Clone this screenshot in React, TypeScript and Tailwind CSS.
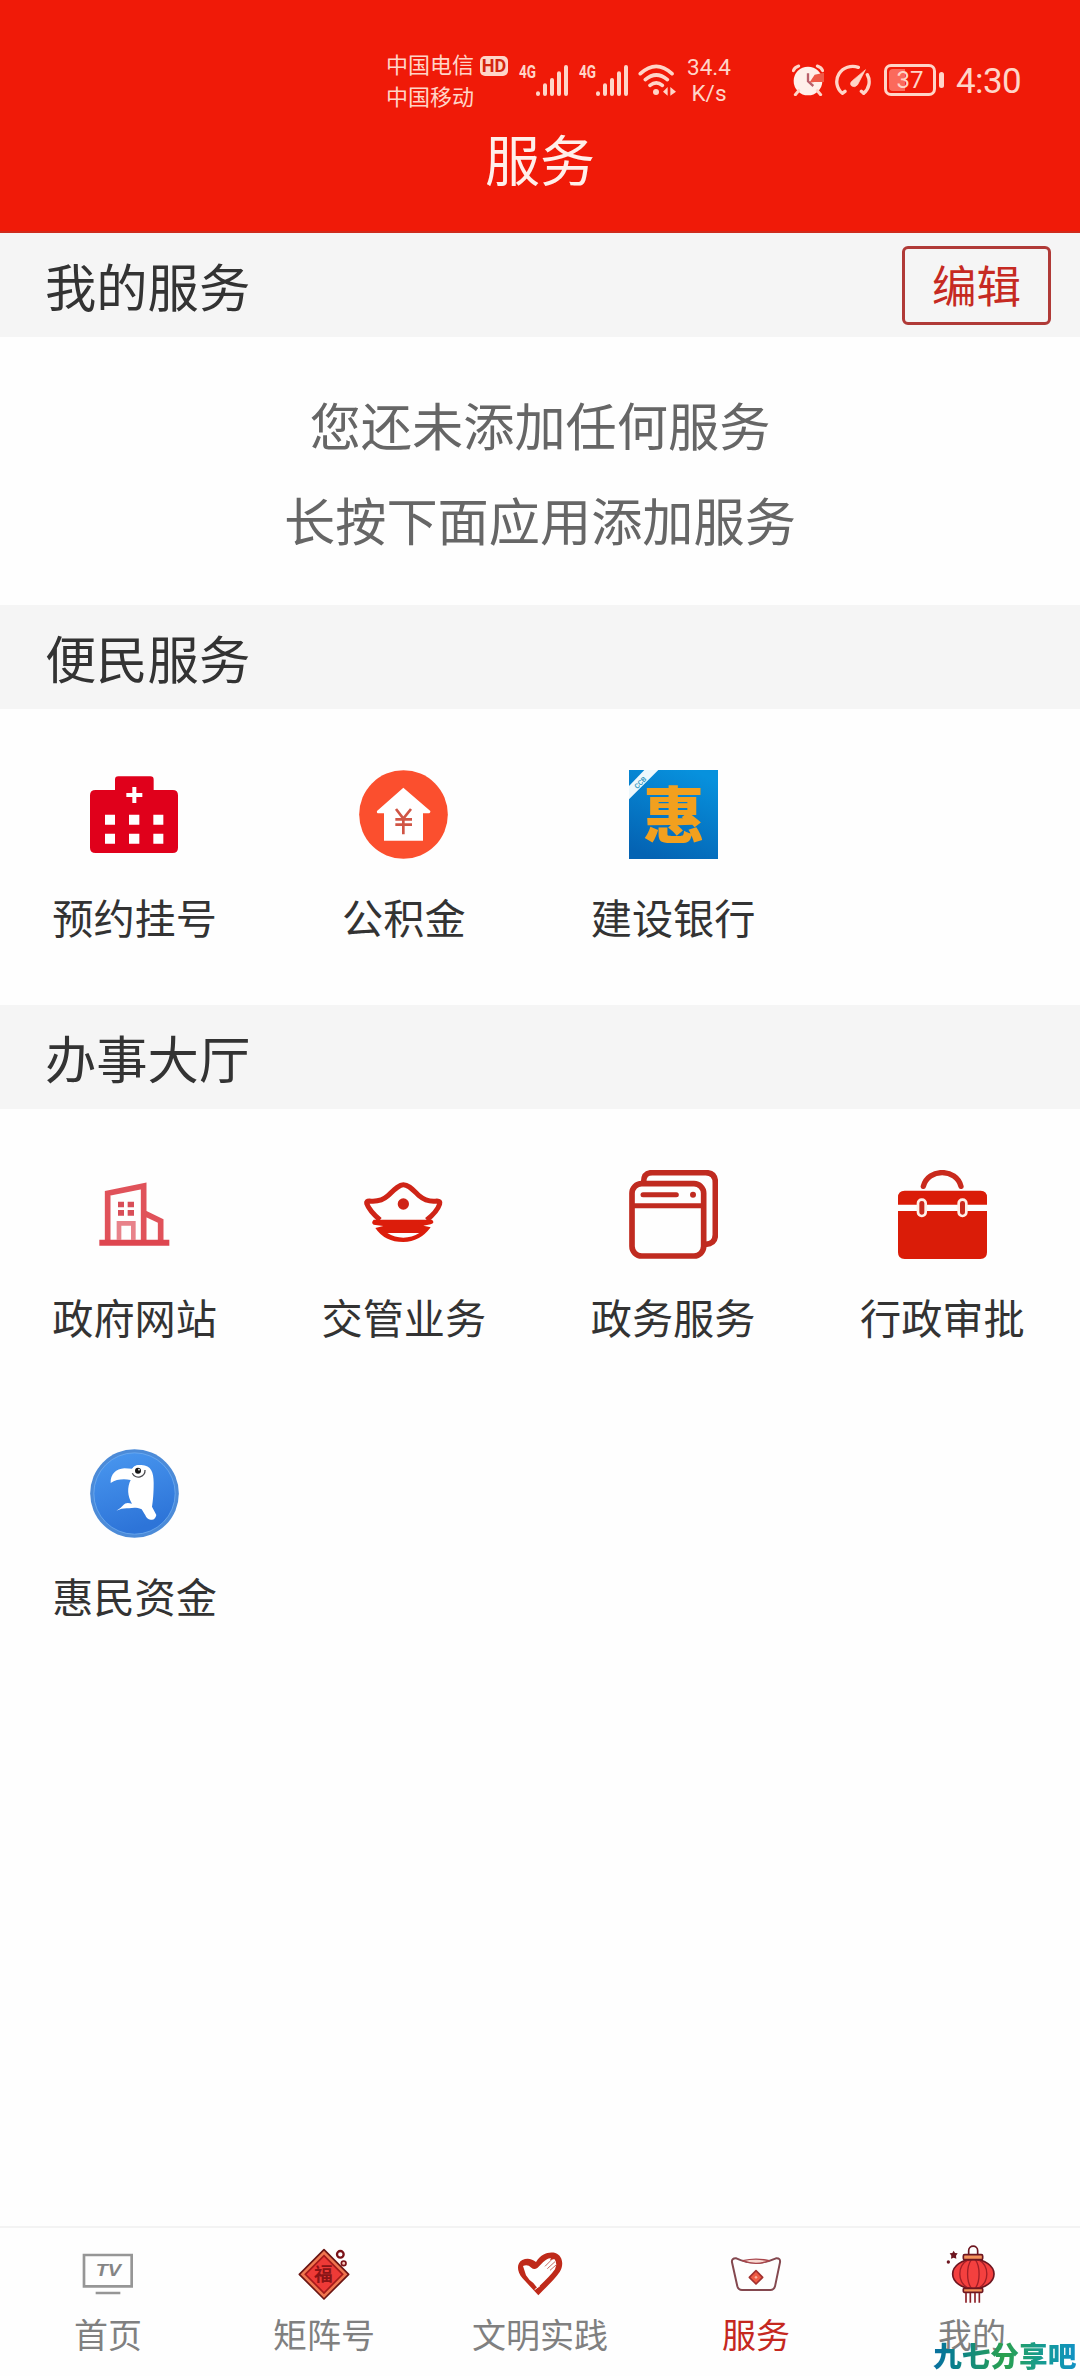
import React from "react";

type Item = { label: string; icon: React.ReactNode };

function HospitalIcon() {
  return (
    <svg className="size-[89px]" viewBox="150 90 267 267">
      <path fill="#e0001b" d="M167 150H225V119Q225 109 235 109H331Q341 109 341 119V150H398Q414 150 414 166V323Q414 339 398 339H167Q150 339 150 323V166Q150 150 167 150Z" />
      <path stroke="#fff" strokeWidth="12" d="M283 141V189M259 165H307" />
      <path fill="#fff" d="M195 224h30v30h-30zM267 224h31v30h-31zM340 224h30v30h-30zM195 281h30v30h-30zM267 281h31v30h-31zM340 281h30v30h-30z" />
    </svg>
  );
}

function FundIcon() {
  return (
    <svg className="size-[89px]" viewBox="957 90 267 267">
      <circle cx="1090.500" cy="223.500" r="133" fill="#fb4f2e" />
      <path fill="#fff" d="M1090 143L1171 213Q1172 220 1164 220H1149V302H1032V220H1016Q1009 220 1011 213Z" />
      <path fill="none" stroke="#d05545" strokeWidth="8" d="M1068 207L1090 236L1113 207M1090 234V283M1066 238H1116M1066 254H1116" />
    </svg>
  );
}

function BankIcon() {
  return (
    <svg className="size-[89px] overflow-visible" viewBox="145 90 267 267">
      <defs>
        <linearGradient id="bank" x1="0.700" y1="0" x2="0.300" y2="1">
          <stop offset="0" stopColor="#0791dd" />
          <stop offset="1" stopColor="#0463b3" />
        </linearGradient>
      </defs>
      <rect x="145" y="90" width="267" height="267" fill="url(#bank)" />
      <path fill="#eef8fc" d="M191 90H233L145 178V138Z" />
      <text x="179" y="135" transform="rotate(-45 179 128)" textAnchor="middle" fontSize="21" fontWeight="700" fill="#3b9cc4" fontFamily="Roboto">CCB</text>
      <text x="280" y="293" textAnchor="middle" fontSize="184" fontWeight="900" fill="#f2a01e" fontFamily="Noto Sans CJK SC">惠</text>
    </svg>
  );
}

function BuildingIcon() {
  return (
    <svg className="size-[89px]" viewBox="150 90 267 267" fill="none" stroke="#e0525a">
      <path strokeWidth="17" d="M203 300V160L311 138V300M316 221L362 243V300" />
      <path stroke="#de4650" strokeWidth="18" d="M178 308H388" />
      <path stroke="#e8828a" strokeWidth="14" d="M237 300V250H280V300" />
      <path fill="#d84e58" stroke="none" d="M234 185h18v17h-18zM263 185h19v17h-19zM234 210h18v17h-18zM263 210h19v17h-19z" />
    </svg>
  );
}

function IngotIcon() {
  return (
    <svg className="size-[89px]" viewBox="957 90 267 267" fill="none" stroke="#cf2417" strokeLinejoin="round">
      <path strokeWidth="15" d="M1020 240C1004 226 986 207 980 190Q978 183 988 183Q1022 187 1044 167C1062 150 1076 134 1090 134C1106 134 1119 150 1137 167Q1160 187 1191 183Q1202 183 1199 192C1193 210 1178 226 1160 240" />
      <circle cx="1090" cy="192" r="17" fill="#cf2417" stroke="none" />
      <path fill="#dc1d0b" stroke="none" d="M1001 239H1176Q1186 248 1172 253L1150 257L1172 262Q1140 306 1090 306Q1034 306 1006 264L1030 258L1001 254Q992 248 1001 239ZM1042 279Q1064 293 1090 293Q1116 293 1138 279Z" fillRule="evenodd" />
    </svg>
  );
}

function WindowsIcon() {
  return (
    <svg className="size-[89px]" viewBox="144 90 267 267" fill="none" stroke="#c02b20" strokeWidth="17" strokeLinecap="round">
      <path strokeLinecap="butt" d="M188 126C188 106 197 98 214 98H374Q403 98 403 128V284Q403 311 374 313" />
      <rect x="153" y="131" width="215" height="217" rx="29" />
      <path strokeWidth="15" strokeLinecap="butt" d="M153 197H368" />
      <path strokeWidth="15" d="M186 164H286" />
      <circle cx="336" cy="164" r="9" fill="#c02b20" stroke="none" />
    </svg>
  );
}

function BriefcaseIcon() {
  return (
    <svg className="size-[89px]" viewBox="952 90 267 267">
      <path fill="none" stroke="#c92a1d" strokeWidth="16" strokeLinecap="round" d="M1028 139C1042 84 1127 84 1141 139" />
      <path fill="#da1c08" d="M972 152H1200Q1219 152 1219 172V194H952V172Q952 152 972 152ZM952 213H1219V337Q1219 357 1199 357H972Q952 357 952 337Z" />
      <rect x="1012" y="179" width="23" height="49" rx="11" fill="#c92a1d" stroke="#fff0e8" strokeWidth="8" />
      <rect x="1134" y="179" width="23" height="49" rx="11" fill="#c92a1d" stroke="#fff0e8" strokeWidth="8" />
    </svg>
  );
}

function BirdIcon() {
  return (
    <svg className="size-[89px]" viewBox="150 87 267 267">
      <defs>
        <linearGradient id="bird" x1="0" y1="0" x2="0.300" y2="1">
          <stop offset="0" stopColor="#4a98f0" />
          <stop offset="1" stopColor="#2d74d8" />
        </linearGradient>
      </defs>
      <circle cx="283.500" cy="220.500" r="133" fill="#4c8bd8" />
      <circle cx="283.500" cy="220.500" r="122" fill="url(#bird)" stroke="#75b2f3" strokeWidth="2" />
      <path fill="#fff" d="M212 189C211 162 228 147 253 145L276 146Q287 133 304 135C334 136 341 158 341 188C341 218 339 243 336 260L349 285Q345 302 332 299Q320 298 316 286L305 268C290 262 280 263 267 265Q248 263 229 272Q245 262 251 254Q257 246 276 251C262 228 261 202 272 180C250 176 229 178 212 189Z" />
      <circle cx="295" cy="154" r="19" fill="#fff" />
      <path fill="none" stroke="#4b4b50" strokeWidth="4" d="M277 160A20 20 0 0 0 315 150" />
      <circle cx="294" cy="152" r="9" fill="#151515" />
      <circle cx="297" cy="149" r="2.500" fill="#fff" />
    </svg>
  );
}

function TvIcon() {
  return (
    <svg className="size-[60px]" viewBox="114 105 180 180">
      <path fill="none" stroke="#969696" strokeWidth="8" d="M132 135H275V229H132ZM167 249H241" />
      <text x="167" y="199" fontSize="50" fontWeight="700" fontStyle="italic" fill="#858585" textLength="76" lengthAdjust="spacingAndGlyphs" fontFamily="Liberation Sans">TV</text>
    </svg>
  );
}

function FuIcon() {
  return (
    <svg className="size-[60px]" viewBox="762 105 180 180">
      <path fill="#f0764f" stroke="#6b1513" strokeWidth="5" strokeLinejoin="round" d="M852 119L926 193L852 267L778 193Z" />
      <path fill="#ee3a37" stroke="#a51a1a" strokeWidth="5" d="M852 137L908 193L852 249L796 193Z" />
      <text x="850" y="214" textAnchor="middle" fontSize="56" fontWeight="700" fill="#8a1416" fontFamily="Noto Sans CJK SC">福</text>
      <circle cx="901" cy="133" r="10" fill="#fff" stroke="#7a1218" strokeWidth="7" />
      <circle cx="911" cy="160" r="7" fill="#f7c5b9" stroke="#7a1218" strokeWidth="5" />
    </svg>
  );
}

function HeartIcon() {
  return (
    <svg className="size-[60px]" viewBox="210 105 180 180">
      <path fill="#bf2a1a" d="M295 256L247 204C230 185 229 159 247 150C262 142 277 147 288 156C303 132 326 124 346 129C369 137 372 166 359 186C345 207 319 231 295 256Z" />
      <path fill="#fff" d="M249 168Q263 162 274 173Q282 181 292 174L309 157Q325 142 333 145L330 151L343 147L347 154L349 164L345 178Q332 197 292 234L280 219Q267 211 258 196Z" />
      <path stroke="#c76a60" strokeWidth="3" d="M315 169L334 150M322 176L345 155M330 181L348 165" />
      <path stroke="#fff" strokeWidth="3" d="M284 239L300 227" />
    </svg>
  );
}

function ServiceIcon() {
  return (
    <svg className="size-[60px]" viewBox="858 105 180 180" fill="none" stroke="#84484f" strokeWidth="6" strokeLinejoin="round">
      <path d="M889 145Q948 172 1008 145Q1022 144 1020 157L1005 229Q1002 240 991 240H906Q895 240 892 229L876 157Q874 144 889 145Z" />
      <path fill="#f8d9d2" stroke="#a8444a" strokeWidth="4" d="M908 152Q948 143 988 152Q948 168 908 152Z" />
      <path fill="#ef5a43" stroke="#a2302f" strokeWidth="5" d="M948 182L968 202L948 222L928 202Z" />
      <path fill="#f9b3a0" stroke="none" d="M948 197l5 5l-5 5l-5-5z" />
    </svg>
  );
}

function LanternIcon() {
  return (
    <svg className="size-[60px]" viewBox="246 105 180 180" fill="none" stroke="#6d1620" strokeWidth="5">
      <path d="M326 134V122C326 104 353 104 353 122V134" />
      <ellipse cx="340" cy="192" rx="62" ry="44" fill="#f4403f" />
      <path stroke="#a31f27" strokeWidth="4" d="M325 149C291 167 291 217 325 235M334 149C319 170 319 214 334 235M346 149C361 170 361 214 346 235M355 149C389 167 389 217 355 235" />
      <rect x="310" y="134" width="58" height="15" rx="4" fill="#f5925b" />
      <rect x="310" y="235" width="58" height="12" rx="3" fill="#f5925b" />
      <path stroke="#8d2028" d="M318 249V278M331 249V278M345 249V278M358 249V278" />
      <path fill="#6d1620" stroke="none" d="M281 122l4 7l8 1l-5 7l1 9l-8-3l-8 3l1-9l-5-7l8-1z" />
      <circle cx="265" cy="156" r="5" fill="#6d1620" stroke="none" />
    </svg>
  );
}

function Signal() {
  return (
    <svg className="h-8 w-[50px] overflow-visible" viewBox="446 70 150 96">
      <text x="446" y="113" fontSize="56" fontWeight="700" textLength="51" lengthAdjust="spacingAndGlyphs" fill="#ffd5c8" fontFamily="Roboto">4G</text>
      <path stroke="#ffd5c8" strokeWidth="12" strokeLinecap="round" d="M503 158V160M524 134V160M545 118V160M566 98V160M587 79V160" />
    </svg>
  );
}

function StatusBar() {
  return (
    <div className="mt-[44px] flex h-[72px] items-center pl-[386px] text-[#ffd5c8]">
      <div className="mb-[2px] w-[88px] text-[22px] leading-8 whitespace-nowrap">
        <p>中国电信</p>
        <p>中国移动</p>
      </div>
      <div className="mb-[28px] ml-[6px] flex h-5 w-7 items-center justify-center rounded-[5px] bg-[#ffd5c8] font-['Roboto',sans-serif] text-[18px] font-bold leading-none text-[#d3250f]">
        HD
      </div>
      <div className="ml-[11px] flex gap-[10px]">
        <Signal />
        <Signal />
      </div>
      <svg className="ml-[9px] h-[34px] w-[38px]" viewBox="803 68 114 102" fill="none" stroke="#ffd5c8" strokeWidth="11" strokeLinecap="round">
        <path d="M810 100Q858 56 905 100M825 118Q858 90 891 118M839 135Q858 120 876 135" />
        <circle cx="857" cy="155" r="9" fill="#ffd5c8" stroke="none" />
        <path fill="#ffd5c8" stroke="none" d="M878 154L892 140V166ZM900 140L917 154L900 166Z" />
      </svg>
      <div className="ml-[10px] w-[46px] text-center font-['Roboto',sans-serif] text-[22.500px] leading-[26px]">
        <p>34.4</p>
        <p>K/s</p>
      </div>
      <svg className="ml-[60px] h-8 w-8" viewBox="184 70 96 96">
        <circle cx="232" cy="121" r="43" fill="#fff0ea" />
        <path fill="none" stroke="#ffd5c8" strokeWidth="9" strokeLinecap="round" d="M188 90Q192 80 204 76M260 76Q272 80 276 90M204 150L194 162M260 150L270 162" />
        <path fill="#ee5a48" d="M252 102L280 96L280 124H252L236 126Z" />
        <path stroke="#b9606a" strokeWidth="7" d="M232 98V122L248 136" fill="none" />
      </svg>
      <svg className="ml-[11px] h-8 w-[37px]" viewBox="314 70 111 96" fill="none" stroke="#ffd5c8" strokeWidth="10" strokeLinecap="round">
        <path d="M336 158A48 46 0 0 1 384 80M411 102A48 46 0 0 1 400 158M336 158L344 152M400 158L393 152" />
        <path fill="#ffd5c8" strokeWidth="2" d="M405 88L382 132Q374 142 364 136Q356 128 366 120Z" />
      </svg>
      <div className="ml-3 flex h-8 w-[52px] items-center rounded-[7px] border-[3px] border-[#ffd5c8] px-[2px]">
        <div className="flex h-[22px] w-full items-center justify-center rounded-sm bg-gradient-to-r from-[#fb6a5c] from-37% to-transparent to-37% font-['Roboto',sans-serif] text-[24px] leading-none">
          37
        </div>
      </div>
      <div className="ml-[3px] h-4 w-[5px] rounded-sm bg-[#ffd5c8]" />
      <span className="mt-[3px] ml-[12px] font-['Roboto',sans-serif] text-[35px] leading-none tracking-[-0.6px]">4:30</span>
    </div>
  );
}

function SectionTitle({ title, children }: { title: string; children?: React.ReactNode }) {
  return (
    <div className="flex h-[104px] items-center justify-between bg-[#f5f5f5] pr-[29px] pl-[45px]">
      <h2 className="text-[51.300px] leading-none text-[#333]">{title}</h2>
      {children}
    </div>
  );
}

function ServiceGrid({ items }: { items: Item[] }) {
  return (
    <div className="grid grid-cols-4 pt-[61px] pr-[3px]">
      {items.map((item) => (
        <div key={item.label} className="flex h-[279px] flex-col items-center">
          {item.icon}
          <span className="mt-[37px] text-[41.200px] leading-none text-[#333]">{item.label}</span>
        </div>
      ))}
    </div>
  );
}

const convenience: Item[] = [
  { label: "预约挂号", icon: <HospitalIcon /> },
  { label: "公积金", icon: <FundIcon /> },
  { label: "建设银行", icon: <BankIcon /> },
];

const hall: Item[] = [
  { label: "政府网站", icon: <BuildingIcon /> },
  { label: "交管业务", icon: <IngotIcon /> },
  { label: "政务服务", icon: <WindowsIcon /> },
  { label: "行政审批", icon: <BriefcaseIcon /> },
  { label: "惠民资金", icon: <BirdIcon /> },
];

const tabs: Item[] = [
  { label: "首页", icon: <TvIcon /> },
  { label: "矩阵号", icon: <FuIcon /> },
  { label: "文明实践", icon: <HeartIcon /> },
  { label: "服务", icon: <ServiceIcon /> },
  { label: "我的", icon: <LanternIcon /> },
];

function App() {
  return (
    <div className="relative flex h-[2376px] w-[1080px] flex-col overflow-hidden bg-[#fefefe] font-['Noto_Sans_CJK_SC',sans-serif]">
      <header className="flex h-[233px] flex-col border-b-2 border-[#cf2a1c] bg-[#f01a08]">
        <StatusBar />
        <h1 className="mt-[14px] text-center text-[55px] leading-none text-[#ffefea]">服务</h1>
      </header>

      <SectionTitle title="我的服务">
        <button className="h-[79px] w-[149px] rounded-[6px] border-[3px] border-[#b03a37] pb-[2px] text-[44.500px] leading-none text-[#c62a22]">
          编辑
        </button>
      </SectionTitle>
      <div className="flex h-[268px] flex-col items-center justify-center pt-[2px] text-[51.200px] leading-[95px] text-[#666]">
        <p>您还未添加任何服务</p>
        <p>长按下面应用添加服务</p>
      </div>

      <SectionTitle title="便民服务" />
      <div className="h-[296px]">
        <ServiceGrid items={convenience} />
      </div>

      <SectionTitle title="办事大厅" />
      <ServiceGrid items={hall} />

      <nav className="mt-auto grid h-[150px] grid-cols-5 border-t-2 border-[#f3f3f3]">
        {tabs.map((tab) => (
          <div key={tab.label} className="flex flex-col items-center pt-[17px]">
            {tab.icon}
            <span className={`mt-[12px] text-[34px] leading-none ${tab.label === "服务" ? "text-[#c5281f]" : "text-[#808080]"}`}>
              {tab.label}
            </span>
          </div>
        ))}
      </nav>

      <div className="absolute bottom-[6px] left-[933px] bg-gradient-to-r from-[#0a6fa0] via-[#2ba04c] to-[#1391c4] bg-clip-text text-[28.700px] font-black leading-[30px] whitespace-nowrap text-transparent">
        九七分享吧
      </div>
    </div>
  );
}

export default App;
